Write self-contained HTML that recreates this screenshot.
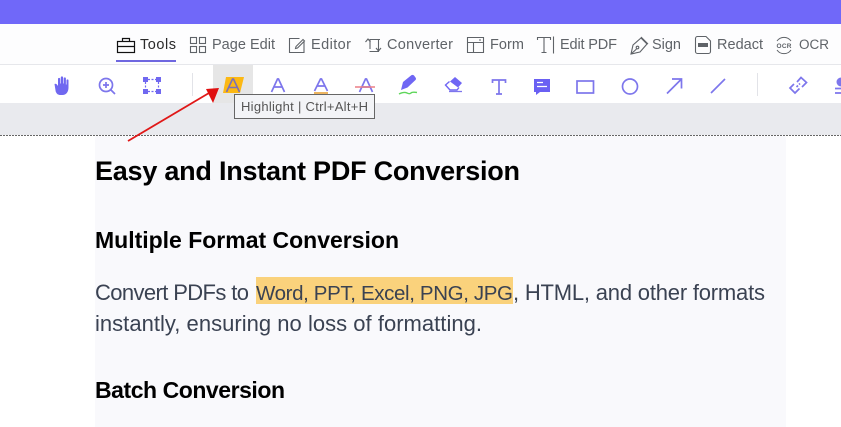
<!DOCTYPE html>
<html><head><meta charset="utf-8"><style>
html,body{margin:0;padding:0;background:#fff;overflow:hidden}
svg{display:block}
text{font-family:"Liberation Sans",sans-serif}
.n{font-size:14.5px;fill:#5f6368}
.h{font-weight:700;fill:#000}
.p{font-size:22px;fill:#3a4252}
.i{fill:none;stroke:#7d76ec;stroke-width:1.7}
.g{fill:none;stroke:#5f6368;stroke-width:1.1}
</style></head><body>
<svg width="841" height="427" viewBox="0 0 841 427" xmlns="http://www.w3.org/2000/svg">
<rect width="841" height="427" fill="#fff"/>
<rect width="841" height="24" fill="#7068f9"/>
<rect y="24" width="841" height="40" fill="#fdfdfe"/>
<rect y="64" width="841" height="1" fill="#e6e7eb"/>
<rect y="65" width="841" height="38" fill="#fff"/>
<rect y="103" width="841" height="32" fill="#e9eaee"/>
<line x1="0" x2="841" y1="135.5" y2="135.5" stroke="#666" stroke-width="1" stroke-dasharray="2 1"/>
<rect x="95" y="136" width="691" height="291" fill="#f9f9fc"/>

<!-- nav -->
<rect x="116" y="60" width="60" height="2" fill="#6f67e0"/>
<g fill="none" stroke="#111" stroke-width="1.2">
<rect x="117.500" y="41.500" width="17" height="11"/><path d="M117.500 46.500h17M122.500 41.500v-3h7v3"/></g>
<text x="140" y="49" class="n" style="fill:#2a2a2a" textLength="36">Tools</text>
<g class="g"><rect x="190.500" y="37.500" width="6" height="6"/><rect x="199.500" y="37.500" width="6" height="6"/><rect x="190.500" y="46.500" width="6" height="6"/><rect x="199.500" y="46.500" width="6" height="6"/></g>
<text x="212" y="49" class="n" textLength="63">Page Edit</text>
<path class="g" d="M304 42v10.500h-14.500v-14h10M296 46.500l-.5 2 2-.5 7-7-1.500-1.500z"/>
<text x="311" y="49" class="n" textLength="40">Editor</text>
<path class="g" d="M370 50v-9.500h10M365.500 43l2.500-3 2.500 3M378.500 40.500v12h-9M376 49l2.500 3 2.500-3" transform="translate(0 -1)"/>
<text x="387" y="49" class="n" textLength="66">Converter</text>
<path class="g" d="M467.500 37.500h16v15h-16zM467.500 42.500h16M473.500 42.500v10M479 40h2"/>
<text x="490" y="49" class="n" textLength="34">Form</text>
<path class="g" d="M537.500 40v-2.500h13V40M544 37.500v15M541.500 52.500h5M553.500 36.500v17"/>
<text x="560" y="49" class="n" textLength="57">Edit PDF</text>
<path class="g" d="M631 54l2-9 8-7 6 6-7 8zM631 54l5.500-5M641 37l7 7"/><circle class="g" cx="637.500" cy="47.500" r="1.300"/>
<text x="652" y="49" class="n" textLength="29">Sign</text>
<path class="g" d="M695.500 38.500a2 2 0 0 1 2-2h8.500l4.500 4.500v10.500a2 2 0 0 1-2 2h-11a2 2 0 0 1-2-2z"/><rect x="698" y="43" width="10" height="4" fill="#5f6368"/>
<text x="717" y="49" class="n" textLength="46">Redact</text>
<path class="g" d="M777 41a8.500 8.500 0 0 1 14 0M777 50a8.500 8.500 0 0 0 14 0" style="stroke-width:1"/>
<text x="776.500" y="48" style="font-size:6.500px;font-weight:700;fill:#5f6368" textLength="15">OCR</text>
<text x="799" y="49" style="font-size:13.500px;fill:#5f6368" textLength="30">OCR</text>

<!-- toolbar -->
<rect x="213" y="65" width="40" height="38" fill="#e6e6e6"/>
<path fill="#7068f0" d="M54.500 84c1-.7 2.200 0 2.800 1l.7 1V79c0-1.500 2.200-1.500 2.200 0v4.500h.6V77.500c0-1.500 2.300-1.500 2.300 0v6h.6V78.500c0-1.500 2.200-1.500 2.200 0v6h.6V80.500c0-1.500 2-1.500 2 0v7c0 4.500-2.500 7.500-6 7.500h-2c-2.500 0-3.700-1-4.800-3.500z"/>
<circle class="i" cx="106" cy="85" r="6.500"/><path class="i" d="M111 90l4 4M103 85h6M106 82v6"/>
<g fill="#7068f0"><rect x="143" y="77" width="5" height="5"/><rect x="156" y="77" width="5" height="5"/><rect x="143" y="89" width="5" height="5"/><rect x="156" y="89" width="5" height="5"/></g>
<path d="M148 79.500h8M148 91.500h8M145.500 82v7M158.500 82v7" fill="none" stroke="#7068f0" stroke-width="1.2" stroke-dasharray="2 1.500"/>
<rect x="192" y="73" width="1" height="23" fill="#e2e3e8"/>

<path d="M226 77h18l-4 16h-17z" fill="#fcb813"/>
<path d="M226.500 92l6-13h1l6 13M229 87.500h8" fill="none" stroke="#7c70b8" stroke-width="1.6"/>
<path class="i" d="M271.500 92l6-13h1l6 13M274 87h8"/>
<path class="i" d="M314.500 91l6-12h1l6 12M317 86h8"/><path d="M314 93h14" stroke="#e8a23a" stroke-width="1.600"/>
<path class="i" d="M359.500 92l6-13h1l6 13M362 87h8"/><path d="M355 87h20" stroke="#ec7f85" stroke-width="1.600"/>

<path fill="#6f66f4" d="M401 90l2-8 8-6.500c1-.8 2-.8 3 0l1.500 2c.8 1 .5 2 0 2.500l-8 7.500z"/>
<path d="M399 94c4-2 6-2 8-1s3 1 4 0 3-1 6-.5" fill="none" stroke="#5ed65a" stroke-width="1.400"/>
<path fill="#6f66f4" d="M455 77l7 6-4 4.500-8-6z"/><path d="M449.500 81.500l-4 3.500 4.500 5h7l2-2.500" fill="none" stroke="#6f66f4" stroke-width="1.400"/>
<path d="M449 91.500h13" stroke="#7d76ec" stroke-width="1.300"/>
<path class="i" d="M492.500 83v-3h13v3M499 79.500v14M496 94h6"/>
<path fill="#6a60f3" d="M534 79h16v13h-10l-4 3v-3h-2z"/><path d="M537 82.500h6M537 86.500h10" stroke="#fff" stroke-width="1.200"/>
<rect class="i" x="577" y="81" width="16.500" height="12"/>
<circle class="i" cx="630" cy="86.500" r="7.500"/>
<path class="i" d="M667 93.500l14-14M672 79h9.500v9.500"/>
<path class="i" d="M711 93l14-14"/>
<rect x="757" y="73" width="1" height="23" fill="#e2e3e8"/>
<path class="i" d="M797 82l4-4.500 5.500 5-4.500 4.500M794 84l-4 4 5 5 4.500-4.500M796.500 87l1.500-1.500M800 83.500l-1 1"/>
<circle cx="841" cy="82" r="4.500" fill="#7d76ec"/>
<path d="M835 88.500h6M835 93h6" stroke="#7d76ec" stroke-width="1.800"/>

<!-- tooltip -->
<rect x="234.500" y="94.500" width="140" height="24" fill="#f3f4f7" stroke="#666"/>
<text x="241" y="111" style="font-size:13px;fill:#555" textLength="127">Highlight | Ctrl+Alt+H</text>

<!-- arrow -->
<path d="M128 141L209 93" stroke="#e01818" stroke-width="1.800"/>
<path d="M206 89L219 88L213 103z" fill="#e01010"/>

<!-- content -->
<text x="95" y="180" class="h" style="font-size:27px" textLength="425">Easy and Instant PDF Conversion</text>
<text x="95" y="248" class="h" style="font-size:23px" textLength="304">Multiple Format Conversion</text>
<rect x="256" y="277" width="257" height="27" fill="#fad27c"/>
<text x="95" y="300" class="p" textLength="154">Convert PDFs to</text>
<text x="256" y="300" class="p" style="font-size:20.500px" textLength="257">Word, PPT, Excel, PNG, JPG</text>
<text x="513" y="300" class="p" textLength="252">, HTML, and other formats</text>
<text x="95" y="331" class="p" textLength="387">instantly, ensuring no loss of formatting.</text>
<text x="95" y="398" class="h" style="font-size:23px" textLength="190">Batch Conversion</text>
</svg>
</body></html>
